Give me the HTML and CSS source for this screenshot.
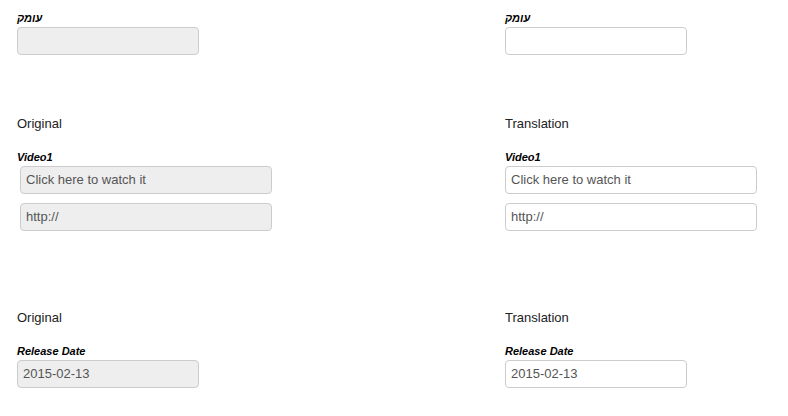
FILE: index.html
```html
<!DOCTYPE html>
<html>
<head>
<meta charset="utf-8">
<link rel="stylesheet" href="styles.css">
</head>
<body>
<div class="page">
  <div class="row row-depth">
    <div class="cell">
      <div class="label">עומק</div>
      <input class="field short readonly" type="text" value="" readonly>
    </div>
    <div class="cell">
      <div class="label">עומק</div>
      <input class="field short" type="text" value="">
    </div>
  </div>

  <div class="row row-video">
    <div class="cell">
      <div class="heading">Original</div>
      <div class="label">Video1</div>
      <div class="stack offset">
        <input class="field wide readonly" type="text" value="Click here to watch it" readonly>
        <input class="field wide readonly" type="text" value="http://" readonly>
      </div>
    </div>
    <div class="cell">
      <div class="heading">Translation</div>
      <div class="label">Video1</div>
      <div class="stack">
        <input class="field wide" type="text" value="Click here to watch it">
        <input class="field wide" type="text" value="http://">
      </div>
    </div>
  </div>

  <div class="row row-date">
    <div class="cell">
      <div class="heading">Original</div>
      <div class="label">Release Date</div>
      <input class="field short readonly" type="text" value="2015-02-13" readonly>
    </div>
    <div class="cell">
      <div class="heading">Translation</div>
      <div class="label">Release Date</div>
      <input class="field short" type="text" value="2015-02-13">
    </div>
  </div>
</div>
</body>
</html>
```

FILE: styles.css
```css
html, body {
  margin: 0;
  padding: 0;
  background: #fff;
}

body {
  font-family: "Liberation Sans", Arial, sans-serif;
  color: #333;
}

.page {
  padding: 11px 0 0 17px;
}

.row {
  display: grid;
  grid-template-columns: 488px 283px;
}

.row-depth {
  margin-bottom: 60px;
}

.row-video {
  margin-bottom: 78px;
}

.cell {
  display: flex;
  flex-direction: column;
  align-items: flex-start;
}

.label {
  font-size: 11px;
  line-height: 14px;
  font-weight: bold;
  font-style: italic;
  color: #000;
  margin-bottom: 2px;
}

.heading {
  font-size: 13px;
  line-height: 18px;
  color: #222;
  margin-bottom: 17px;
}

.stack {
  display: flex;
  flex-direction: column;
  gap: 9px;
}

.stack.offset {
  margin-left: 3px;
}

.field {
  box-sizing: border-box;
  height: 28px;
  margin: 0;
  padding: 0 5px 1px;
  border: 1px solid #ccc;
  border-radius: 4px;
  background: #fff;
  font-family: "Liberation Sans", Arial, sans-serif;
  font-size: 13px;
  color: #555;
  outline: none;
}

.field.readonly {
  background: #eee;
}

.field.short {
  width: 182px;
}

.field.wide {
  width: 252px;
}
```
